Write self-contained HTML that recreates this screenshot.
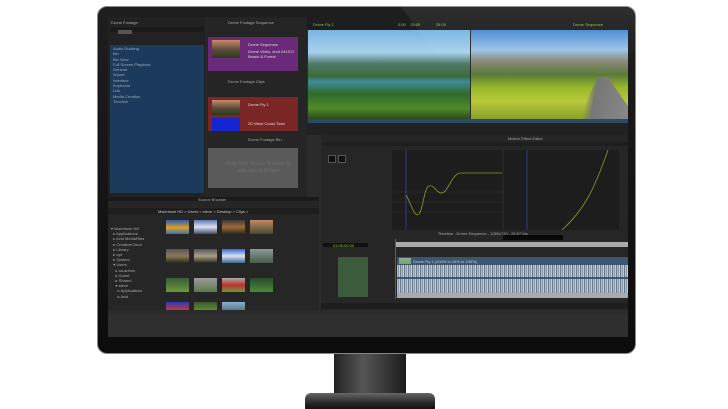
<!DOCTYPE html>
<html><head><style>
*{margin:0;padding:0;box-sizing:border-box}
body{width:728px;height:409px;background:#fff;position:relative;overflow:hidden;font-family:"Liberation Sans",sans-serif;font-size:4px;color:#bbb}
div{position:absolute}
.t{white-space:nowrap;font-size:4px;color:#aaa}
</style></head><body>
<!-- stand -->
<div style="left:334px;top:350px;width:72px;height:46px;background:linear-gradient(90deg,#222,#555 40%,#3a3a3a 70%,#1a1a1a)"></div>
<div style="left:305px;top:393px;width:130px;height:16px;border-radius:6px 6px 0 0;background:linear-gradient(180deg,#666,#2a2a2a 60%,#111)"></div>
<!-- bezel -->
<div style="left:97px;top:6px;width:539px;height:348px;border-radius:10px;background:linear-gradient(180deg,#1e1e1e,#0c0c0c);border:1px solid #888"></div>
<div style="left:108px;top:17px;width:520px;height:320px;background:#2b2b2b;overflow:hidden">
 <!-- left settings panel -->
 <div style="left:0;top:0;width:98px;height:180px;background:#222"></div>
 <div style="left:2px;top:28px;width:94px;height:148px;background:#1c3a5c"></div>
 <div class="t" style="left:3px;top:3px">Drone Footage</div>
 <div style="left:2px;top:10px;width:94px;height:5px;background:#1a1a1a"></div>
 <div style="left:10px;top:13px;width:14px;height:4px;background:#555"></div>
 <div class="t" style="left:5px;top:29px;line-height:5.3px;color:#9ab">Audio Ducking<br>Bin<br>Bin View<br>Full Screen Playback<br>General<br>Import<br>Interface<br>Keyboard<br>Link<br>Media Creation<br>Timeline</div>
 <!-- middle column -->
 <div style="left:99px;top:0;width:100px;height:180px;background:#252525"></div>
 <div class="t" style="left:120px;top:3px">Drone Footage Sequence</div>
 <div style="left:100px;top:20px;width:90px;height:34px;background:#6a2a7a"></div>
 <div style="left:104px;top:23px;width:28px;height:18px;background:linear-gradient(180deg,#c88a6a,#5a4a3a 55%,#2a3a1a)"></div>
 <div class="t" style="left:140px;top:25px;color:#ddd">Drone Sequence</div>
 <div class="t" style="left:140px;top:32px;color:#ddd">Drone Video, shot 041017<br>Beach &amp; Forest</div>
 <div class="t" style="left:120px;top:62px">Drone Footage Clips</div>
 <div style="left:100px;top:80px;width:90px;height:34px;background:#7a2626"></div>
 <div style="left:104px;top:83px;width:28px;height:15px;background:linear-gradient(180deg,#c88a6a,#5a4a3a 55%,#2a3a1a)"></div>
 <div style="left:104px;top:101px;width:28px;height:13px;background:#1525d0"></div>
 <div class="t" style="left:140px;top:85px;color:#ddd">Drone Fly 1</div>
 <div class="t" style="left:140px;top:104px;color:#ddd">2D West Coast Town</div>
 <div class="t" style="left:140px;top:120px">Drone Footage Bin</div>
 <div style="left:100px;top:131px;width:90px;height:40px;background:#5a5a5a"></div>
 <div class="t" style="left:118px;top:144px;font-size:5px;color:#6e6e6e;text-align:center;line-height:7px">Drag from Source Browser to<br>add clips to Project</div>
 <!-- composer -->
 <div style="left:199px;top:0;width:321px;height:13px;background:#1e1e1e"></div>
 <div class="t" style="left:205px;top:5px;color:#8c3">Drone Fly 1</div>
 <div class="t" style="left:290px;top:5px;color:#8c3">0:00 &nbsp;&nbsp; 25:05 &nbsp;&nbsp;&nbsp;&nbsp;&nbsp;&nbsp;&nbsp;&nbsp;&nbsp;&nbsp;&nbsp;&nbsp; 25:05</div>
 <div class="t" style="left:465px;top:5px;color:#8c3">Drone Sequence</div>
 <div style="left:200px;top:13px;width:162px;height:89px;background:linear-gradient(180deg,#7ab4e0 0%,#a9d2ef 25%,#4f7a6a 38%,#3a6a3a 52%,#3d8a9a 58%,#2f6a2a 72%,#4f8a2a 88%,#2a4a1a)"></div>
 <div style="left:363px;top:13px;width:157px;height:89px;background:linear-gradient(180deg,#4a8ad0 0%,#9ac4e8 22%,#8a8a7a 35%,#5a7a3a 50%,#9ab82a 65%,#b8c83a 80%,#8aa02a)"></div>
 <div style="left:470px;top:60px;width:50px;height:42px;background:linear-gradient(100deg,transparent 20%,#777 35%,#888 100%);clip-path:polygon(40% 0,60% 0,100% 70%,100% 100%,0 100%)"></div>
 <div style="left:200px;top:102px;width:320px;height:4px;background:#2a4a6a"></div>
 <div style="left:199px;top:106px;width:321px;height:12px;background:#222"></div>
 <!-- motion effect editor -->
 <div style="left:213px;top:118px;width:307px;height:95px;background:#262626"></div>
 <div class="t" style="left:400px;top:119px">Motion Effect Editor</div>
 <div style="left:215px;top:125px;width:305px;height:4px;background:#1e1e1e"></div>
 <div style="left:220px;top:138px;width:8px;height:8px;background:#111;border:1px solid #555"></div>
 <div style="left:230px;top:138px;width:8px;height:8px;background:#111;border:1px solid #555"></div>
 <div style="left:284px;top:133px;width:110px;height:80px;background:#1d1d1d"></div>
 <svg style="position:absolute;left:284px;top:133px" width="110" height="80"><line x1="0" y1="42" x2="110" y2="42" stroke="#333" stroke-width=".6"/><line x1="0" y1="52" x2="110" y2="52" stroke="#333" stroke-width=".6"/><line x1="0" y1="62" x2="110" y2="62" stroke="#333" stroke-width=".6"/><line x1="14" y1="0" x2="14" y2="80" stroke="#3344aa" stroke-width=".8"/><path d="M14 45 C20 55 22 68 27 64 C31 60 32 38 37 36 C42 34 45 44 50 43 C56 42 60 24 68 23 L110 23" fill="none" stroke="#8a9a2a" stroke-width=".8"/></svg>
 <div style="left:396px;top:133px;width:115px;height:80px;background:#1d1d1d"></div>
 <svg style="position:absolute;left:396px;top:133px" width="115" height="80"><line x1="23" y1="0" x2="23" y2="80" stroke="#3344aa" stroke-width=".8"/><path d="M58 80 C80 60 90 40 104 0" fill="none" stroke="#8a9a2a" stroke-width=".8"/></svg>
 <!-- timeline -->
 <div style="left:213px;top:213px;width:307px;height:80px;background:#262626"></div>
 <div class="t" style="left:330px;top:214px">Timeline - Drone Sequence - 1080x720 - 29.97 fps</div>
 <div style="left:215px;top:226px;width:45px;height:4px;background:#111"></div>
 <div class="t" style="left:225px;top:226px;color:#8c3">01:00:00:00</div>
 <div style="left:395px;top:218px;width:60px;height:5px;background:#0a0a0a"></div>
 <div style="left:288px;top:225px;width:232px;height:5px;background:#aaa"></div>
 <div style="left:230px;top:240px;width:30px;height:40px;background:#3c5a3c"></div>
 <div style="left:289px;top:240px;width:231px;height:8px;background:#3c5570"></div>
 <div style="left:291px;top:241px;width:12px;height:6px;background:linear-gradient(#8ab,#7a3)"></div>
 <div class="t" style="left:305px;top:242px;color:#ccc">Drone Fly 1 (100% to 15% to 245%)</div>
 <div style="left:289px;top:248px;width:231px;height:28px;background:repeating-linear-gradient(90deg,#bbb 0 1px,#8898a8 1px 2px,#ccc 2px 3px,#6a7a8a 3px 4px)"></div>
 <div style="left:289px;top:260px;width:231px;height:2px;background:#3c5570"></div>
 <div style="left:289px;top:276px;width:231px;height:5px;background:#aaa"></div>
 <div style="left:287px;top:222px;width:1px;height:60px;background:#35f"></div>
 <div style="left:213px;top:286px;width:307px;height:6px;background:#1e1e1e"></div>
 <!-- source browser -->
 <div style="left:0;top:180px;width:211px;height:113px;background:#262626"></div>
 <div style="left:0;top:180px;width:211px;height:4px;background:#1a1a1a"></div>
 <div class="t" style="left:90px;top:180px">Source Browser</div>
 <div style="left:0;top:191px;width:211px;height:6px;background:#1e1e1e"></div>
 <div class="t" style="left:50px;top:192px;color:#ccc">Macintosh HD &gt; Users &gt; steve &gt; Desktop &gt; Clips &gt;</div>
 <div class="t" style="left:3px;top:209px;line-height:5.2px;color:#aaa">▾ Macintosh HD<br>&nbsp;&nbsp;▸ Applications<br>&nbsp;&nbsp;▸ Avid MediaFiles<br>&nbsp;&nbsp;▸ CreativeCloud<br>&nbsp;&nbsp;▸ Library<br>&nbsp;&nbsp;▸ opt<br>&nbsp;&nbsp;▸ System<br>&nbsp;&nbsp;▾ Users<br>&nbsp;&nbsp;&nbsp;&nbsp;▸ ca-admin<br>&nbsp;&nbsp;&nbsp;&nbsp;▸ Guest<br>&nbsp;&nbsp;&nbsp;&nbsp;▸ Shared<br>&nbsp;&nbsp;&nbsp;&nbsp;▾ steve<br>&nbsp;&nbsp;&nbsp;&nbsp;&nbsp;&nbsp;▸ Applications<br>&nbsp;&nbsp;&nbsp;&nbsp;&nbsp;&nbsp;▸ Avid</div>
 <div style="left:58px;top:203px;width:23px;height:14px;background:linear-gradient(#2a5ab0,#e0a020 55%,#3070c0)"></div>
 <div style="left:86px;top:203px;width:23px;height:14px;background:linear-gradient(#5a7ab0,#e0e0f0 50%,#3a4a6a)"></div>
 <div style="left:114px;top:203px;width:23px;height:14px;background:linear-gradient(#3a3a3a,#a06a3a 50%,#2a2a1a)"></div>
 <div style="left:142px;top:203px;width:23px;height:14px;background:linear-gradient(#c08a6a,#4a4a2a)"></div>
 <div style="left:58px;top:232px;width:23px;height:14px;background:linear-gradient(#555,#8a7a5a,#2a2a1a)"></div>
 <div style="left:86px;top:232px;width:23px;height:14px;background:linear-gradient(#555,#aaa08a,#2a2a1a)"></div>
 <div style="left:114px;top:232px;width:23px;height:14px;background:linear-gradient(#2a6ad0,#e0e0f0 50%,#3a6a8a)"></div>
 <div style="left:142px;top:232px;width:23px;height:14px;background:linear-gradient(#8a9a9a,#4a5a4a)"></div>
 <div style="left:58px;top:261px;width:23px;height:14px;background:linear-gradient(#3a5a3a,#6a9a3a)"></div>
 <div style="left:86px;top:261px;width:23px;height:14px;background:linear-gradient(#9a9a9a,#5a7a4a)"></div>
 <div style="left:114px;top:261px;width:23px;height:14px;background:linear-gradient(#aaa,#c03030 50%,#6a9a3a)"></div>
 <div style="left:142px;top:261px;width:23px;height:14px;background:linear-gradient(#2a4a2a,#4a8a3a)"></div>
 <div style="left:58px;top:285px;width:23px;height:8px;background:linear-gradient(#2a3ac0,#c03a3a)"></div>
 <div style="left:86px;top:285px;width:23px;height:8px;background:linear-gradient(#3a5a2a,#5a8a3a)"></div>
 <div style="left:114px;top:285px;width:23px;height:8px;background:linear-gradient(#8ab0d0,#5a7a8a)"></div>
 <!-- bottom strip -->
 <div style="left:0;top:298px;width:520px;height:22px;background:#2f2f2f"></div>
</div>
<!-- glare -->
<div style="left:400px;top:6px;width:236px;height:60px;background:linear-gradient(180deg,rgba(255,255,255,.07),rgba(255,255,255,0));clip-path:polygon(0 0,100% 0,100% 100%,20% 100%)"></div>
</body></html>
